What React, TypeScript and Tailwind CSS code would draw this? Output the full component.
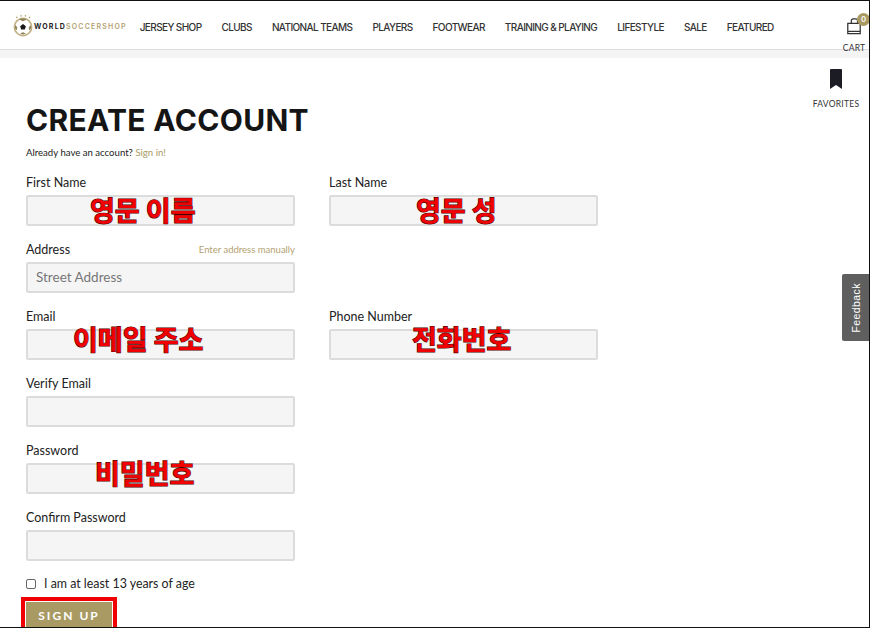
import React from "react";

const nav = [
  "JERSEY SHOP",
  "CLUBS",
  "NATIONAL TEAMS",
  "PLAYERS",
  "FOOTWEAR",
  "TRAINING & PLAYING",
  "LIFESTYLE",
  "SALE",
  "FEATURED",
];

function Logo() {
  return (
    <div className="flex items-center">
      <svg width="22" height="24" viewBox="0 0 23 24" aria-hidden>
        <path d="M5 3l1 1-1 1-1-1zM9.500 1.500l1 1-1 1-1-1zM14 1.500l1 1-1 1-1-1zM18.500 3l1 1-1 1-1-1z" fill="#a8945a" />
        <circle cx="11.500" cy="14" r="9" fill="#fff" stroke="#c2b285" strokeWidth="1.800" />
        <path d="M11.500 11l3 2.200-1.100 3.400h-3.800l-1.100-3.400z" fill="#1a1a1a" />
        <path d="M8 6.500l3.500 1.500 3.500-1.500-1 -1.200h-5zM3.500 12l2 2.500-.5 3-2-2zM19.500 12l-2 2.500.5 3 2-2zM8.500 21l3-1.500 3 1.500-3 1z" fill="#8d8258" />
      </svg>
      <div className="mt-[4px] text-[7px] font-bold tracking-[0.17em] [font-family:Inter,sans-serif]">
        <span className="text-[#222]">WORLD</span>
        <span className="font-semibold text-[#b3a271]">SOCCERSHOP</span>
      </div>
    </div>
  );
}

function Field({
  label,
  note,
  placeholder,
  mark,
  markClass,
}: {
  label: string;
  note?: string;
  placeholder?: string;
  mark?: string;
  markClass?: string;
}) {
  return (
    <div className="w-[269px]">
      <div className="flex h-[19px] items-center justify-between pb-[4px] text-[12.500px] text-[#222]">
        <span>{label}</span>
        {note && <span className="text-[9.500px] text-[#b3a271]">{note}</span>}
      </div>
      <div className="relative flex h-[31px] items-center rounded-[2px] border-2 border-[#dcdcdc] bg-[#f5f5f5] pl-[8px] text-[13.500px] text-[#777]">
        {placeholder}
        {mark && (
          <span
            className={`absolute whitespace-nowrap text-[27px] font-bold leading-none text-[#f00000] [-webkit-text-stroke:1.200px_#4a0000] [font-family:'Noto_Sans_CJK_KR',sans-serif] [paint-order:stroke] ${markClass}`}
          >
            {mark}
          </span>
        )}
      </div>
    </div>
  );
}

export default function App() {
  return (
    <div className="relative h-[628px] w-[870px] overflow-hidden border-t border-r border-b border-[#111] bg-white [font-family:Lato,sans-serif]">
      <header className="flex h-[49px] items-center border-b border-[#ddd] bg-white pl-[12px] pr-[4px] shadow-[0_1px_3px_rgba(0,0,0,0.15)]">
        <Logo />
        <nav className="ml-[13px] mt-[5px] flex gap-[20px] text-[10px] font-medium tracking-[-0.06em] text-[#333] [font-family:Inter,sans-serif]">
          {nav.map((item) => (
            <span key={item}>{item}</span>
          ))}
        </nav>
        <div className="ml-auto flex w-[22px] flex-col items-center pt-[22px]">
          <div className="relative">
            <svg width="16" height="17" viewBox="0 0 18 19" fill="none" stroke="#333" strokeWidth="1.400" aria-hidden>
              <path d="M2 6h14v11.500H2z" />
              <path d="M2 15h14" />
              <path d="M6 6V3a2 2 0 0 1 2-2h3a2 2 0 0 1 2 2v3" />
            </svg>
            <span className="absolute -right-[8px] -top-[5px] flex h-[13px] w-[13px] items-center justify-center rounded-full bg-[#a99a63] text-[8px] font-bold text-white">
              0
            </span>
          </div>
          <span className="mt-[7px] text-[8.500px] tracking-[0.03em] text-[#333]">CART</span>
        </div>
      </header>
      <div className="h-[8px] bg-[#f4f4f4]" />

      <main className="pl-[26px] pt-[43px]">
        <h1 className="text-[30px] font-bold leading-[38px] tracking-[0.01em] text-[#151515] [font-family:Inter,sans-serif]">
          CREATE ACCOUNT
        </h1>
        <p className="mt-[6px] h-[15px] text-[9.600px] leading-[15px] text-[#222]">
          Already have an account? <span className="text-[#a89a5f]">Sign in!</span>
        </p>

        <div className="mt-[16px] grid grid-cols-[269px_269px] gap-x-[34px] gap-y-[17px]">
          <Field label="First Name" mark="영문 이름" markClass="left-[62px] top-[-1px]" />
          <Field label="Last Name" mark="영문 성" markClass="left-[85px] top-[-1px]" />
          <div className="col-span-2">
            <Field label="Address" note="Enter address manually" placeholder="Street Address" />
          </div>
          <Field label="Email" mark="이메일 주소" markClass="left-[45px] -top-[6px]" />
          <Field label="Phone Number" mark="전화번호" markClass="left-[81px] -top-[6px]" />
          <div className="col-span-2">
            <Field label="Verify Email" />
          </div>
          <div className="col-span-2">
            <Field label="Password" mark="비밀번호" markClass="left-[67px] -top-[6px]" />
          </div>
          <div className="col-span-2">
            <Field label="Confirm Password" />
          </div>
        </div>

        <label className="mt-[14px] flex h-[18px] items-center gap-[8px] text-[12.400px] text-[#222]">
          <span className="h-[10px] w-[10px] rounded-[2px] border border-[#666] bg-white" />
          I am at least 13 years of age
        </label>

        <div className="-ml-[5px] mt-[4px] w-[96px] border-[4px] border-[#f00000] p-[1px]">
          <button
            type="button"
            className="flex h-[28px] w-full items-center justify-center bg-[#a99a63] text-[12px] font-bold tracking-[0.17em] text-white"
          >
            SIGN UP
          </button>
        </div>
      </main>

      <div className="absolute right-[10px] top-[68px] flex w-[46px] flex-col items-center">
        <svg width="12" height="20" viewBox="0 0 12 20" aria-hidden>
          <path d="M0 1a1 1 0 0 1 1-1h10a1 1 0 0 1 1 1v19l-6-4-6 4z" fill="#1c1c24" />
        </svg>
        <span className="mt-[9px] text-[8.500px] tracking-[0.03em] text-[#333]">FAVORITES</span>
      </div>

      <div className="absolute right-0 top-[273px] flex h-[67px] w-[27px] items-center justify-center rounded-l-[2px] bg-[#5f5f5f] pl-[3px]">
        <span className="-rotate-90 whitespace-nowrap text-[10.500px] tracking-[0.04em] text-white [font-family:'Liberation_Sans',sans-serif]">
          Feedback
        </span>
      </div>
    </div>
  );
}
